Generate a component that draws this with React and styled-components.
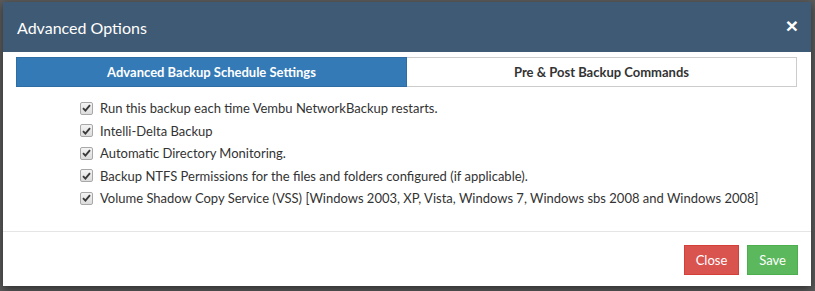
import styled, { createGlobalStyle } from "styled-components";

const GlobalStyle = createGlobalStyle`
  html, body {
    margin: 0;
    padding: 0;
    background: #5b5b5b;
    font-family: Lato, "Liberation Sans", sans-serif;
  }
`;

const options = [
  "Run this backup each time Vembu NetworkBackup restarts.",
  "Intelli-Delta Backup",
  "Automatic Directory Monitoring.",
  "Backup NTFS Permissions for the files and folders configured (if applicable).",
  "Volume Shadow Copy Service (VSS) [Windows 2003, XP, Vista, Windows 7, Windows sbs 2008 and Windows 2008]",
];

const Check = () => (
  <Box>
    <svg width="9" height="8" viewBox="0 0 9 8">
      <path d="M1 4.2 L3.4 6.6 L8 1.2" fill="none" stroke="#3a3a3a" strokeWidth="1.9" />
    </svg>
  </Box>
);

const App = () => {
  return (
    <>
      <GlobalStyle />
      <Backdrop>
        <Modal>
          <Header>
            <Title>Advanced Options</Title>
            <CloseX>×</CloseX>
          </Header>
          <Body>
            <Tabs>
              <Tab active>Advanced Backup Schedule Settings</Tab>
              <Tab>Pre &amp; Post Backup Commands</Tab>
            </Tabs>
            <List>
              {options.map((o) => (
                <Row key={o}>
                  <Check />
                  <span>{o}</span>
                </Row>
              ))}
            </List>
          </Body>
          <Footer>
            <Button variant="danger">Close</Button>
            <Button variant="success">Save</Button>
          </Footer>
        </Modal>
      </Backdrop>
    </>
  );
};

export default App;

const Backdrop = styled.div`
  width: 815px;
  height: 291px;
  box-sizing: border-box;
  padding: 2px 4px 0 3px;
  overflow: hidden;
`;

const Modal = styled.div`
  width: 808px;
  height: 284px;
  background: #ffffff;
  display: flex;
  flex-direction: column;
  box-shadow: 0 3px 9px rgba(0, 0, 0, 0.5);
`;

const Header = styled.div`
  height: 50px;
  background: #3f5a74;
  display: flex;
  align-items: center;
  justify-content: space-between;
  padding: 0 13px 0 14px;
`;

const Title = styled.h4`
  margin: 0;
  color: #ffffff;
  font-size: 16px;
  font-weight: 400;
  padding-top: 1px;
`;

const CloseX = styled.span`
  color: #ffffff;
  font-size: 21px;
  font-weight: 700;
  font-family: "Liberation Sans", sans-serif;
  line-height: 1;
  margin-top: -4px;
`;

const Body = styled.div`
  padding: 5px 13px 0 13px;
  flex: 1;
`;

const Tabs = styled.div`
  display: grid;
  grid-template-columns: 391px 390px;
`;

const Tab = styled.div`
  height: 30px;
  box-sizing: border-box;
  display: flex;
  align-items: center;
  justify-content: center;
  font-size: 13px;
  font-weight: 700;
  color: ${(p) => (p.active ? "#ffffff" : "#333333")};
  background: ${(p) => (p.active ? "#337ab7" : "#ffffff")};
  border: 1px solid ${(p) => (p.active ? "#2e6da4" : "#cccccc")};
  ${(p) => !p.active && "border-left: none;"}
`;

const List = styled.div`
  padding: 10px 0 0 64px;
  display: flex;
  flex-direction: column;
`;

const Row = styled.label`
  display: flex;
  align-items: center;
  gap: 7px;
  height: 22.5px;
  font-size: 13px;
  color: #333333;
`;

const Box = styled.span`
  width: 11px;
  height: 11px;
  border: 1px solid #a8a8a8;
  border-radius: 2px;
  background: linear-gradient(#f4f4f4, #dcdcdc);
  display: flex;
  align-items: center;
  justify-content: center;
  flex-shrink: 0;
`;

const Footer = styled.div`
  border-top: 1px solid #e5e5e5;
  display: flex;
  justify-content: flex-end;
  gap: 8px;
  padding: 13px 13px 11px 0;
`;

const Button = styled.button`
  height: 30px;
  padding: 0 11px;
  font-family: Lato, "Liberation Sans", sans-serif;
  font-size: 13px;
  color: #ffffff;
  border-radius: 0;
  border: 1px solid ${(p) => (p.variant === "danger" ? "#d43f3a" : "#4cae4c")};
  background: ${(p) => (p.variant === "danger" ? "#d9534f" : "#5cb85c")};
`;
